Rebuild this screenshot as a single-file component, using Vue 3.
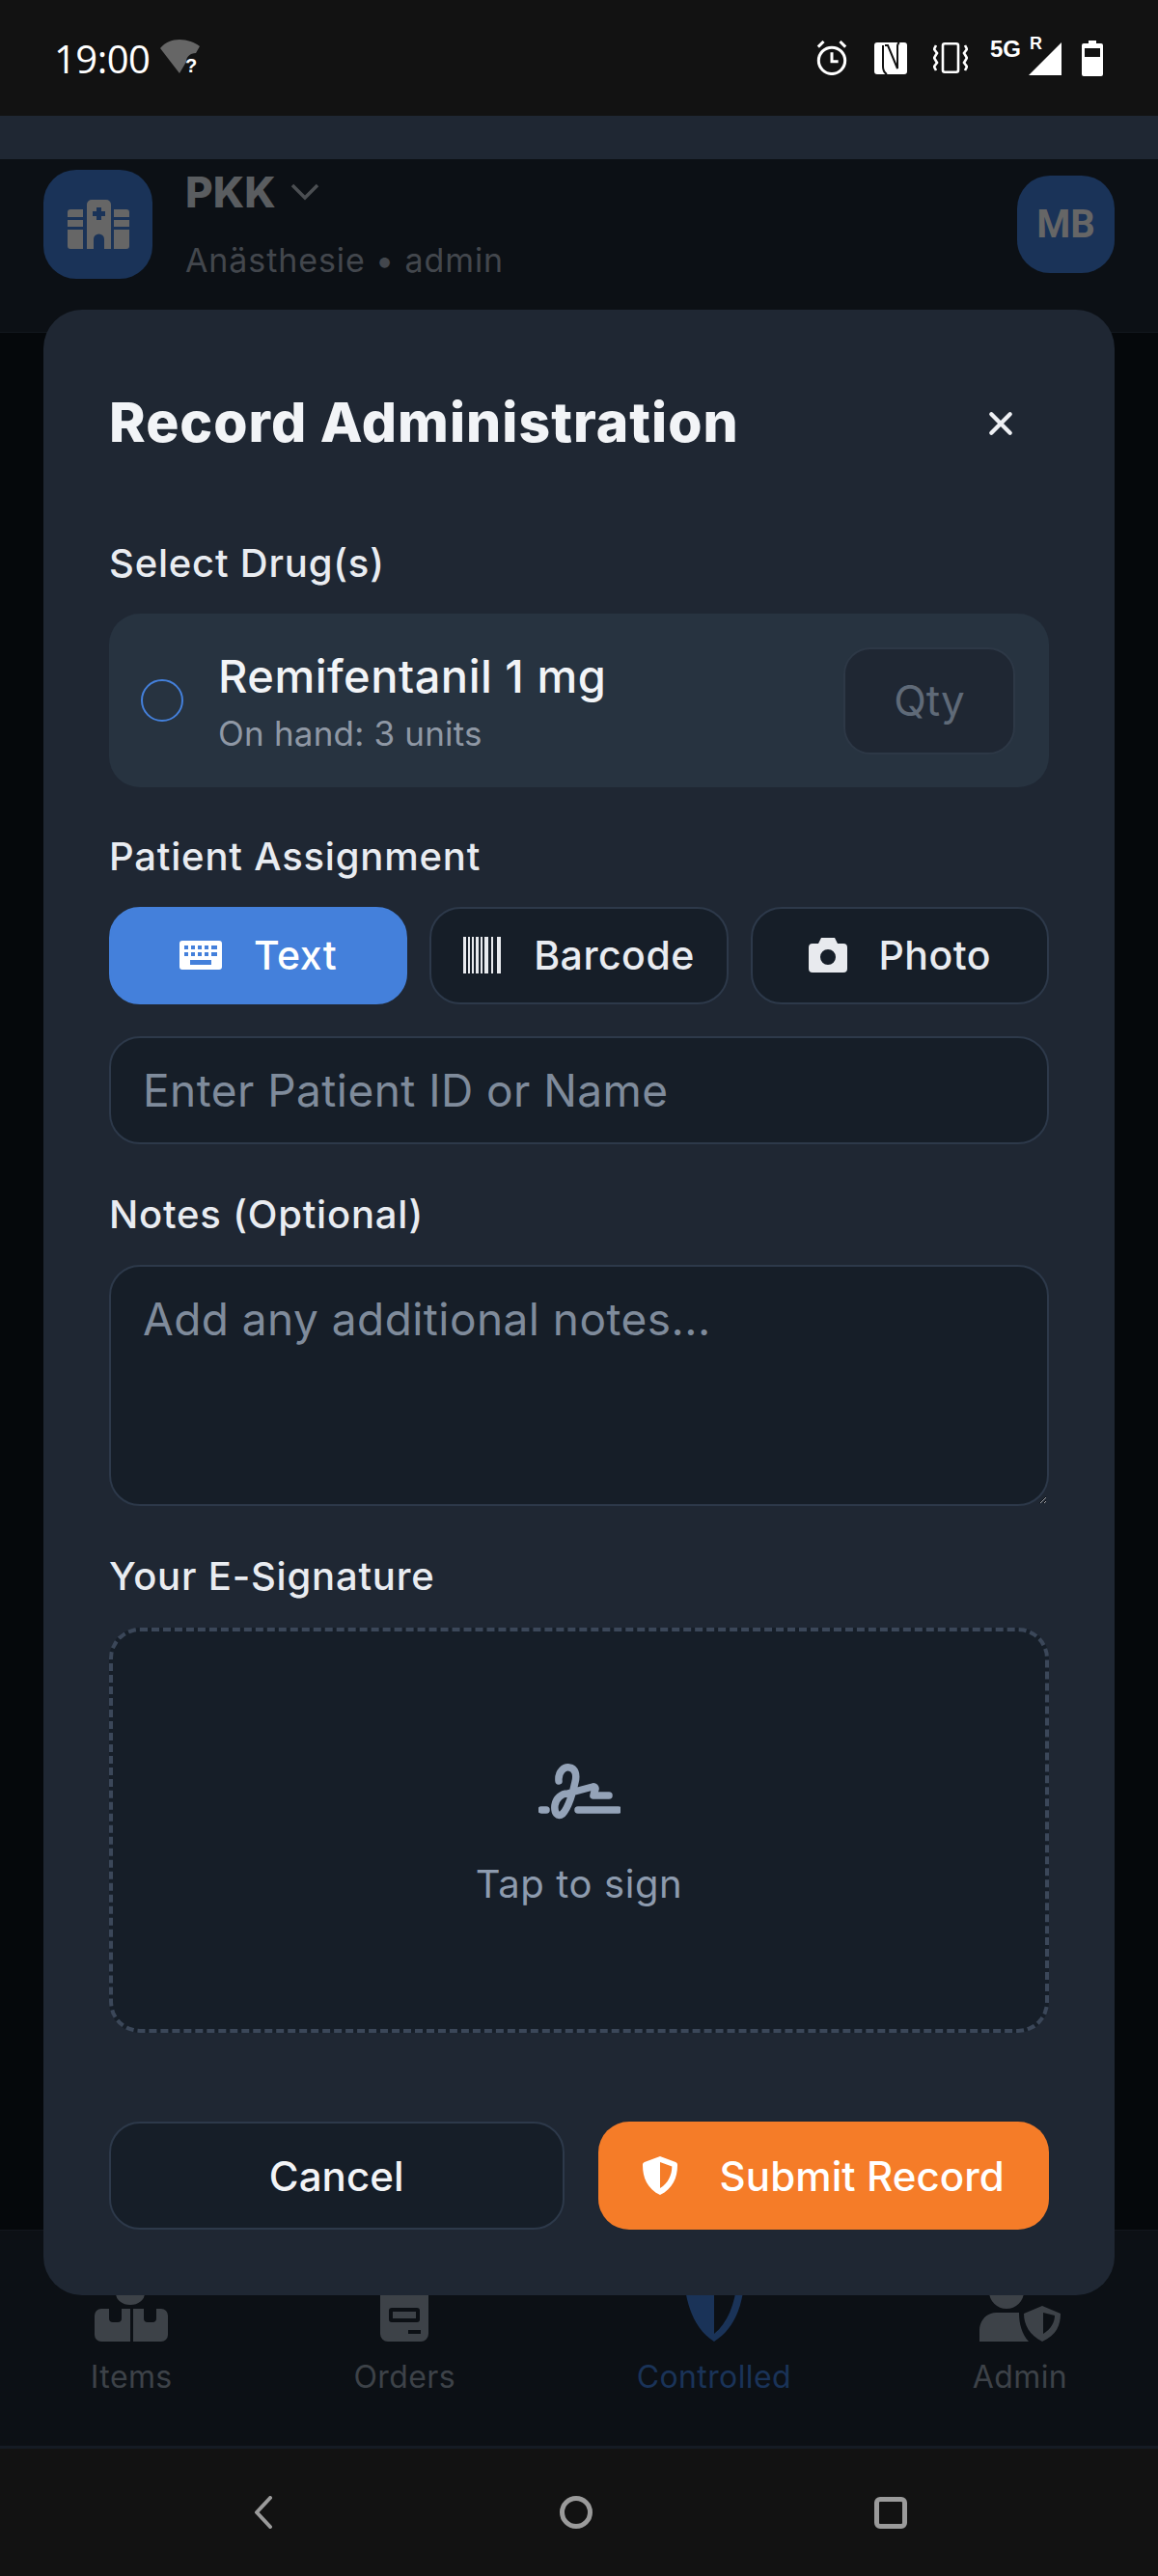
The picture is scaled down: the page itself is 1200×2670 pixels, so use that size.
<template>
	<div class="phone">
		<div class="status-bar">
			<div class="status-left">
				<span class="clock">19:00</span>
				<svg class="wifi" width="42" height="38" viewBox="0 0 42 38">
					<path d="M0 9C5 3 12 0 20 0s16 3 21 7l-4 7c-6 0-10 4-10 9l-7 12z" fill="#666" />
					<text x="26" y="34" class="wifi-q">?</text>
				</svg>
			</div>
			<div class="status-right">
				<svg width="34" height="36" viewBox="0 0 36 38" fill="none" stroke="#fff" stroke-width="3.2">
					<circle cx="18" cy="22" r="14.500" />
					<path d="M18 13v10h7M3 7l6-6M33 7l-6-6" />
				</svg>
				<svg class="nfc" width="34" height="33" viewBox="0 0 34 33">
					<rect width="34" height="33" rx="3" fill="#fff" />
					<path d="M9 3v22c0 3 1 6 4 8M11 3h3l10 24V3M26 0c-2 1-2 2-2 4" fill="none" stroke="#121212" stroke-width="2" />
				</svg>
				<svg class="vib" width="36" height="32" viewBox="0 0 36 32" fill="none" stroke="#fff" stroke-width="2.600">
					<rect x="10" y="1.300" width="16" height="29.400" rx="2" />
					<path d="M3 3L1 7l3 4-3 5 3 5-3 4 2 4M33 3l2 4-3 4 3 5-3 5 3 4-2 4" />
				</svg>
				<div class="signal">
					<span class="net">5G</span>
					<span class="roam">R</span>
					<svg width="34" height="34" viewBox="0 0 34 34"><path d="M34 0v34H0z" fill="#fff" /></svg>
				</div>
				<svg class="batt" width="22" height="37" viewBox="0 0 22 37">
					<path d="M7 0h8v3h5a2 2 0 0 1 2 2v30a2 2 0 0 1-2 2H2a2 2 0 0 1-2-2V5a2 2 0 0 1 2-2h5zM3 8v9h16V8z" fill="#fff" fill-rule="evenodd" />
				</svg>
			</div>
		</div>
		<div class="strip"></div>

		<header class="app-header">
			<div class="logo">
				<svg width="64" height="51" viewBox="0 0 64 51" fill="#666">
					<path d="M3 10h13v8H0v-5a3 3 0 0 1 3-3zM0 21h16v7H0zM0 31h16v20H3a3 3 0 0 1-3-3zM48 10h13a3 3 0 0 1 3 3v5H48zM48 21h16v7H48zM48 31h16v17a3 3 0 0 1-3 3H48z" />
					<path fill-rule="evenodd" d="M25 0h15a5 5 0 0 1 5 5v46h-7V41a5.500 5.500 0 0 0-11 0v10h-7V5a5 5 0 0 1 5-5zm5 8v4h-4v5h4v4h5v-4h4v-5h-4V8z" />
				</svg>
			</div>
			<div class="org">
				<div class="org-name">
					PKK
					<svg width="30" height="20" viewBox="0 0 30 20" fill="none" stroke="#4b4e52" stroke-width="3.500">
						<path d="M2 3l13 13L28 3" />
					</svg>
				</div>
				<div class="org-sub">Anästhesie • admin</div>
			</div>
			<div class="avatar">MB</div>
		</header>

		<main class="page-body"></main>

		<nav class="tabbar">
			<div v-for="item in navItems" :key="item.label" class="nav-item" :class="{ active: item.active }">
				<svg width="78" height="78" viewBox="0 0 78 78" fill="currentColor">
					<path :d="item.icon" fill-rule="evenodd" />
				</svg>
				<span>{{ item.label }}</span>
			</div>
		</nav>

		<div class="system-nav">
			<svg width="22" height="34" viewBox="0 0 22 34" fill="none" stroke="#9a9a9a" stroke-width="4" stroke-linecap="round" stroke-linejoin="round">
				<path d="M18 2L4 17l14 15" />
			</svg>
			<span class="sys-home"></span>
			<span class="sys-recent"></span>
		</div>

		<div class="modal">
			<div class="modal-head">
				<h2>Record Administration</h2>
				<svg class="close" width="28" height="28" viewBox="0 0 26 26" stroke="#eef0f4" stroke-width="4" stroke-linecap="round">
					<path d="M4 4l18 18M22 4L4 22" />
				</svg>
			</div>

			<label class="lbl first">Select Drug(s)</label>
			<div class="drug-card">
				<span class="radio"></span>
				<div class="drug-info">
					<div class="drug-name">Remifentanil 1 mg</div>
					<div class="drug-stock">On hand: 3 units</div>
				</div>
				<input class="qty" placeholder="Qty" />
			</div>

			<label class="lbl tight">Patient Assignment</label>
			<div class="mode-row">
				<button class="mode active">
					<svg width="44" height="30" viewBox="0 0 44 30">
						<path fill="#fff" fill-rule="evenodd" d="M3 0h38a3 3 0 0 1 3 3v24a3 3 0 0 1-3 3H3a3 3 0 0 1-3-3V3a3 3 0 0 1 3-3zm2 5v4h4V5zm7 0v4h4V5zm7 0v4h4V5zm7 0v4h4V5zm7 0v4h6V5zM5 12v4h4v-4zm7 0v4h4v-4zm7 0v4h4v-4zm7 0v4h4v-4zm7 0v4h6v-4zM11 20v5h22v-5z" />
					</svg>
					Text
				</button>
				<button class="mode">
					<svg width="40" height="38" viewBox="0 0 40 38" fill="#e8eaee">
						<path d="M0 0h3v38H0zM5 0h2v38H5zM9 0h2v38H9zM13 0h3v38h-3zM18 0h2v38h-2zM22 0h4v38h-4zM29 0h2v38h-2zM35 0h4v38h-4z" />
					</svg>
					Barcode
				</button>
				<button class="mode">
					<svg width="40" height="36" viewBox="0 0 40 36">
						<path fill="#e8eaee" fill-rule="evenodd" d="M13 0h14l3 6h6a4 4 0 0 1 4 4v22a4 4 0 0 1-4 4H4a4 4 0 0 1-4-4V10a4 4 0 0 1 4-4h6zm7 12a8 8 0 1 0 0 16 8 8 0 0 0 0-16z" />
					</svg>
					Photo
				</button>
			</div>
			<input class="text-input" placeholder="Enter Patient ID or Name" />

			<label class="lbl notes-label">Notes (Optional)</label>
			<textarea class="notes" placeholder="Add any additional notes..."></textarea>

			<label class="lbl sign-label">Your E-Signature</label>
			<div class="sign-box">
				<svg width="85" height="60" viewBox="0 0 85 60" fill="none" stroke="#94a3b8" stroke-width="7.500" stroke-linecap="round" stroke-linejoin="round">
					<path d="M21 18C20 8 27 3 32 4c6 1 8 7 6 15-2 10-7 27-13 33-5 4-9-1-8-9 1-7 7-12 13-12l26-7c3-1 4 2 2 5l-1 4h16" />
					<path d="M41 48h42M3 48h5" />
				</svg>
				<span>Tap to sign</span>
			</div>

			<div class="actions">
				<button class="btn cancel">Cancel</button>
				<button class="btn submit">
					<svg width="36" height="40" viewBox="0 0 38 46" preserveAspectRatio="none">
						<path fill="#fff" fill-rule="evenodd" d="M19 0l17 7c2 1 2 2 2 4 0 14-5 28-19 35C5 39 0 25 0 11c0-2 0-3 2-4zm0 7v31c9-6 13-16 13-26z" />
					</svg>
					Submit Record
				</button>
			</div>
		</div>
	</div>
</template>

<script setup>
const navItems = [
	{
		label: 'Items',
		icon: 'M23 0h30v28a15 12 0 0 1-30 0zM8 44h8v10a4 4 0 0 0 4 4h5a4 4 0 0 0 4-4V44h9v34H8a7 7 0 0 1-7-7V51a7 7 0 0 1 7-7zM41 44h11v10a4 4 0 0 0 4 4h5a4 4 0 0 0 4-4V44h5a7 7 0 0 1 7 7v20a7 7 0 0 1-7 7H41z',
	},
	{
		label: 'Orders',
		icon: 'M24 0h30v8h4a6 6 0 0 1 6 6v56a8 8 0 0 1-8 8H22a8 8 0 0 1-8-8V14a6 6 0 0 1 6-6h4zM26 43a3 3 0 0 0-3 3v9a3 3 0 0 0 3 3h26a3 3 0 0 0 3-3v-9a3 3 0 0 0-3-3zM27 47h24v7H27zM43 66v4h13v-4z',
	},
	{
		label: 'Controlled',
		icon: 'M7 0h64c0 30-6 62-32 78C14 62 8 30 7 0zM39 70c17-14 24-38 25-70H39z',
		active: true,
	},
	{
		label: 'Admin',
		icon: 'M25 8a18 18 0 1 1 0 36 18 18 0 0 1 0-36zM14 48h24c0 12 3 22 10 30H-3V66c0-10 8-18 17-18zM62 41l19 8c0 12-4 22-19 29-13-7-19-17-19-29zm1 7v22c8-5 12-12 12-19z',
	},
];
</script>

<style>
html,
body {
	margin: 0;
	background: #0c1015;
}
</style>

<style scoped>
.phone {
	position: relative;
	width: 1200px;
	height: 2670px;
	display: flex;
	flex-direction: column;
	overflow: hidden;
	background: #05080b;
	font-family: Inter, "Noto Sans", sans-serif;
	color: #e9ecf1;
}

.status-bar {
	height: 120px;
	flex: none;
	box-sizing: border-box;
	padding: 0 57px 0 56px;
	background: #121212;
	display: flex;
	align-items: center;
	justify-content: space-between;
}

.status-left {
	display: flex;
	align-items: center;
	gap: 10px;
}

.clock {
	font-family: "Open Sans", sans-serif;
	font-size: 40px;
	letter-spacing: -0.5px;
	color: #fff;
}

.wifi-q {
	font-family: "Liberation Sans", sans-serif;
	font-size: 20px;
	font-weight: 700;
	fill: #fff;
}

.status-right {
	display: flex;
	align-items: center;
	gap: 27px;
}

.signal {
	position: relative;
	width: 74px;
	height: 36px;
	display: flex;
	justify-content: flex-end;
	align-items: flex-end;
	margin-left: -4px;
	margin-right: -6px;
}

.net {
	position: absolute;
	left: 0;
	top: -5px;
	font-family: "Liberation Sans", sans-serif;
	font-size: 24px;
	font-weight: 700;
	color: #fff;
}

.roam {
	position: absolute;
	left: 41px;
	top: -7px;
	font-family: "Liberation Sans", sans-serif;
	font-size: 18px;
	font-weight: 700;
	color: #fff;
}

.strip {
	height: 45px;
	flex: none;
	background: #1f2733;
}

.app-header {
	height: 180px;
	flex: none;
	box-sizing: border-box;
	padding: 11px 45px 0;
	display: flex;
	align-items: flex-start;
	background: #0c1015;
	border-bottom: 1px solid #12171d;
}

.logo {
	width: 113px;
	height: 113px;
	border-radius: 34px;
	background: #1a3358;
	display: flex;
	align-items: center;
	justify-content: center;
	flex: none;
}

.org {
	margin-left: 34px;
	flex: 1;
}

.org-name {
	display: flex;
	align-items: center;
	gap: 15px;
	height: 46px;
	font-size: 44px;
	font-weight: 800;
	color: #5a5d60;
}

.org-sub {
	margin-top: 27px;
	font-size: 34px;
	letter-spacing: 0.9px;
	color: #43474d;
}

.avatar {
	width: 101px;
	height: 101px;
	margin-top: 6px;
	border-radius: 34px;
	background: #1a3358;
	color: #666;
	font-family: Roboto, sans-serif;
	font-size: 40px;
	font-weight: 700;
	display: flex;
	align-items: center;
	justify-content: center;
}

.page-body {
	flex: 1;
}

.tabbar {
	height: 227px;
	flex: none;
	box-sizing: border-box;
	padding-top: 37px;
	background: #0c1015;
	border-top: 1px solid #12171d;
	border-bottom: 3px solid #151b24;
	display: flex;
	justify-content: space-around;
}

.nav-item {
	display: flex;
	flex-direction: column;
	align-items: center;
	gap: 17px;
	font-size: 32px;
	letter-spacing: 0.4px;
	color: #3d4248;
	height: 140px;
}

.nav-item svg {
	overflow: visible;
}

.nav-item.active {
	color: #1a3358;
}

.system-nav {
	height: 132px;
	flex: none;
	background: #121212;
	box-sizing: border-box;
	padding: 0 260px 0 262px;
	display: flex;
	align-items: center;
	justify-content: space-between;
}

.sys-home {
	width: 24px;
	height: 24px;
	margin-left: 3px;
	border: 5px solid #9a9a9a;
	border-radius: 50%;
}

.sys-recent {
	width: 24px;
	height: 23px;
	border: 5px solid #9a9a9a;
	border-radius: 6px;
}

.modal {
	position: absolute;
	left: 45px;
	top: 321px;
	width: 1110px;
	height: 2058px;
	box-sizing: border-box;
	padding: 68px;
	border-radius: 40px;
	background: #1f2733;
}

.modal-head {
	height: 96px;
	display: flex;
	align-items: center;
	justify-content: space-between;
	padding-right: 36px;
}

.modal-head h2 {
	margin: 0;
	font-size: 57px;
	font-weight: 800;
	letter-spacing: 1px;
	color: #f2f4f7;
	white-space: nowrap;
}

.close {
	margin-top: 3px;
}

.lbl {
	display: block;
	margin: 48px 0 29px;
	height: 48px;
	line-height: 48px;
	font-size: 40px;
	font-weight: 500;
	letter-spacing: 0.8px;
	color: #e9ecf1;
}

.lbl.first {
	margin-top: 75px;
	margin-bottom: 28px;
}

.lbl.tight {
	margin-bottom: 28px;
}

.lbl.notes-label {
	margin: 49px 0 28px;
}

.lbl.sign-label {
	margin: 49px 0 29px;
}

.drug-card {
	height: 180px;
	box-sizing: border-box;
	padding: 0 35px 0 33px;
	border-radius: 32px;
	background: #273340;
	display: flex;
	align-items: center;
}

.radio {
	width: 44px;
	height: 44px;
	box-sizing: border-box;
	border: 2px solid #4480db;
	border-radius: 50%;
	flex: none;
}

.drug-info {
	margin-left: 36px;
	flex: 1;
}

.drug-name {
	font-size: 47px;
	font-weight: 500;
	letter-spacing: 0.5px;
	color: #f2f4f7;
}

.drug-stock {
	margin-top: 10px;
	font-size: 35px;
	letter-spacing: 0.2px;
	color: #8f98a5;
}

.qty {
	width: 178px;
	height: 111px;
	box-sizing: border-box;
	text-align: center;
	border: 2px solid #2d3846;
	border-radius: 28px;
	background: #1f2733;
	font: 44px Inter, sans-serif;
	outline: none;
}

.qty::placeholder {
	color: #5f6a78;
}

.mode-row {
	display: flex;
	gap: 23px;
	height: 101px;
}

.mode {
	flex: 1;
	box-sizing: border-box;
	padding: 0 0 2px;
	border: 2px solid #2d394a;
	border-radius: 32px;
	background: #161e28;
	color: #e9ecf1;
	font: 500 41px Inter, sans-serif;
	letter-spacing: 0.5px;
	display: flex;
	align-items: center;
	justify-content: center;
	gap: 33px;
}

.mode.active {
	border-color: #4480db;
	background: #4480db;
	color: #fff;
}

.text-input,
.notes {
	display: block;
	width: 100%;
	box-sizing: border-box;
	border: 2px solid #2d394a;
	border-radius: 32px;
	background: #161e28;
	padding: 0 33px;
	font: 46px Inter, sans-serif;
	letter-spacing: 0.45px;
	color: #e9ecf1;
	outline: none;
}

.text-input {
	height: 112px;
	margin-top: 33px;
}

.notes {
	height: 250px;
	padding-top: 26px;
}

.text-input::placeholder,
.notes::placeholder {
	color: #7f8b9b;
}

.sign-box {
	height: 420px;
	box-sizing: border-box;
	padding-top: 10px;
	border: 4px dashed #3b4759;
	border-radius: 32px;
	background: #161e28;
	display: flex;
	flex-direction: column;
	align-items: center;
	justify-content: center;
	gap: 40px;
	font-size: 40px;
	letter-spacing: 0.6px;
	color: #8d9bae;
}

.actions {
	margin-top: 92px;
	display: flex;
	gap: 35px;
}

.btn {
	flex: 1;
	height: 112px;
	box-sizing: border-box;
	border-radius: 32px;
	font: 500 42px Inter, sans-serif;
	letter-spacing: 0.1px;
	color: #f2f4f7;
	display: flex;
	align-items: center;
	justify-content: center;
	gap: 44px;
}

.cancel {
	border: 2px solid #2d394a;
	background: #161e28;
}

.submit {
	border: none;
	background: #f57c28;
	color: #fff;
}
</style>
